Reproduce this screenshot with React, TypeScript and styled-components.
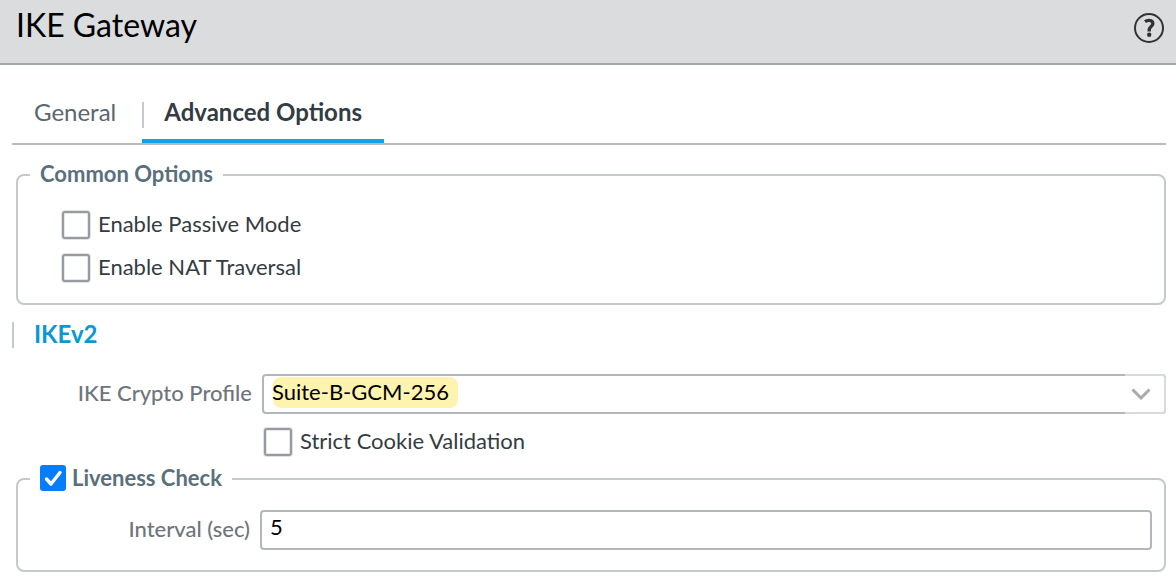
import React, { useState } from "react";
import styled, { createGlobalStyle } from "styled-components";

const GlobalStyle = createGlobalStyle`
  *, *::before, *::after { box-sizing: border-box; }
  body {
    margin: 0;
    background: #ffffff;
    color: #333c42;
    font-family: Lato, "Liberation Sans", sans-serif;
    font-size: 22px;
    line-height: 28px;
  }
`;

const Header = styled.header`
  display: flex;
  align-items: flex-start;
  justify-content: space-between;
  padding: 6px 12px 17px 16px;
  background: #dbdcde;
  border-bottom: 2px solid #a2a8ad;
`;

const Title = styled.h1`
  margin: 0;
  padding-bottom: 2px;
  color: #000000;
  font-size: 32px;
  line-height: 38px;
  font-weight: 400;
`;

const HelpButton = styled.button`
  display: flex;
  margin: 7px 0 0;
  padding: 0;
  border: 0;
  background: none;
  cursor: pointer;
`;

const Content = styled.main`
  padding: 31px 10px 8px 12px;
`;

const TabList = styled.div`
  display: flex;
  border-bottom: 2px solid #b9babb;
`;

const Tab = styled.button<{ $active?: boolean }>`
  display: flex;
  padding: 0;
  border: 0;
  border-bottom: 4px solid ${(p) => (p.$active ? "#0ba4e9" : "transparent")};
  border-radius: ${(p) => (p.$active ? "2px 2px 0 0" : "0")};
  background: none;
  color: ${(p) => (p.$active ? "#333c42" : "#5b6670")};
  font: ${(p) => (p.$active ? 700 : 400)} 24px/32px Lato, "Liberation Sans", sans-serif;
  cursor: pointer;
`;

const TabLabel = styled.span<{ $divided?: boolean }>`
  height: 26px;
  margin: 6px 0 11px;
  padding: 0 ${(p) => (p.$divided ? "22px" : "26px")} 0 20px;
  border-left: 2px solid ${(p) => (p.$divided ? "#c4cace" : "transparent")};
  line-height: 20px;
`;

const Group = styled.fieldset<{ $top: number }>`
  min-width: 0;
  margin: ${(p) => p.$top}px 0 0 4px;
  padding: 0 12px;
  border: 2px solid #c5c9cd;
  border-radius: 8px;
`;

const Legend = styled.legend`
  padding: 0 10px;
  color: #59707c;
  font-weight: 700;
`;

const LabelText = styled.span`
  display: block;
  padding-bottom: 2px;
  line-height: 26px;
`;

const CheckLabel = styled.label`
  display: flex;
  align-items: center;
  width: fit-content;
  gap: 8px;
`;

const LegendLabel = styled(CheckLabel)`
  align-items: flex-start;
  gap: 6px;
`;

const Checkbox = styled.input.attrs({ type: "checkbox" })`
  appearance: none;
  width: 28px;
  height: 28px;
  margin: 0;
  border: 2px solid #969ba1;
  border-radius: 3px;
  background: #ffffff;
  box-shadow: 0 0 0 1px #e0e2e4, inset 0 0 0 1px #e6e7e9;
`;

const CheckFrame = styled.span`
  position: relative;
  display: flex;
`;

const LegendCheckbox = styled(Checkbox)`
  width: 26px;
  height: 26px;
  &:checked {
    border-color: #067cff;
    background: #067cff;
    box-shadow: none;
  }
`;

const CheckMark = styled.svg`
  position: absolute;
  inset: 0;
  pointer-events: none;
`;

const CheckStack = styled.div`
  display: flex;
  flex-direction: column;
  gap: 15px;
  padding: 22px 0 21px 32px;
`;

const SectionTitle = styled.h2`
  margin: 17px 0 26px;
  padding: 0 0 2px 20px;
  border-left: 2px solid #c4cace;
  color: #0d96d4;
  font-size: 24px;
  line-height: 24px;
  font-weight: 700;
`;

const ProfileGrid = styled.div`
  display: grid;
  grid-template-columns: 240px 1fr;
  column-gap: 10px;
  row-gap: 14px;
  align-items: center;
`;

const IntervalRow = styled.div`
  display: grid;
  grid-template-columns: 220px 1fr;
  column-gap: 10px;
  align-items: center;
  padding: 17px 0 20px;
`;

const FieldLabel = styled.label`
  padding-bottom: 3px;
  color: #6e757b;
  font-weight: 500;
  text-align: right;
  white-space: nowrap;
`;

const SelectFrame = styled.div`
  position: relative;
  display: flex;
`;

const Highlight = styled.span`
  position: absolute;
  top: 3px;
  left: 11px;
  width: 185px;
  height: 31px;
  border-radius: 8px;
  background: #fff3b0;
`;

const Select = styled.select`
  position: relative;
  appearance: none;
  width: 100%;
  height: 40px;
  padding: 0 48px 4px 8px;
  border: 2px solid #b3b7bc;
  border-radius: 4px;
  background: transparent;
  color: #000000;
  font: 400 22px/28px Lato, "Liberation Sans", sans-serif;
`;

const Trigger = styled.span`
  position: absolute;
  top: 0;
  right: 0;
  display: flex;
  width: 41px;
  height: 40px;
  align-items: center;
  justify-content: center;
  padding-right: 8px;
  border: 2px solid #d8dadc;
  border-left: 0;
  border-radius: 0 4px 4px 0;
  background: #ffffff;
  pointer-events: none;
`;

const CookieOption = styled(CheckLabel)`
  grid-column: 2;
  margin-left: 2px;
`;

const TextInput = styled.input`
  width: 100%;
  height: 40px;
  padding: 0 8px 8px;
  border: 2px solid #b3b7bc;
  border-radius: 4px;
  background: #ffffff;
  color: #000000;
  font: 400 22px/28px Lato, "Liberation Sans", sans-serif;
`;

export default function App() {
  const [liveness, setLiveness] = useState(true);
  return (
    <>
      <GlobalStyle />
      <Header>
        <Title>IKE Gateway</Title>
        <HelpButton type="button" aria-label="Help">
          <svg width="30" height="30" viewBox="0 0 30 30" fill="none">
            <circle cx="15" cy="15" r="14" stroke="#303234" strokeWidth="2" />
            <path
              d="M11 8.6C12.4 7.6 14 7.2 15.6 7.4C17.8 7.6 19 9 18.8 10.8C18.6 13.2 15.4 13.8 15.2 17V18.4"
              stroke="#303234"
              strokeWidth="3.4"
            />
            <circle cx="15.2" cy="21.8" r="2.2" fill="#303234" />
          </svg>
        </HelpButton>
      </Header>
      <Content>
        <TabList role="tablist">
          <Tab type="button" role="tab" aria-selected={false}>
            <TabLabel>General</TabLabel>
          </Tab>
          <Tab type="button" role="tab" aria-selected $active>
            <TabLabel $divided>Advanced Options</TabLabel>
          </Tab>
        </TabList>

        <Group $top={16}>
          <Legend>
            <LabelText>Common Options</LabelText>
          </Legend>
          <CheckStack>
            <CheckLabel>
              <Checkbox />
              <LabelText>Enable Passive Mode</LabelText>
            </CheckLabel>
            <CheckLabel>
              <Checkbox />
              <LabelText>Enable NAT Traversal</LabelText>
            </CheckLabel>
          </CheckStack>
        </Group>

        <SectionTitle>IKEv2</SectionTitle>
        <ProfileGrid>
          <FieldLabel htmlFor="profile">IKE Crypto Profile</FieldLabel>
          <SelectFrame>
            <Highlight />
            <Select id="profile" defaultValue="Suite-B-GCM-256">
              <option>Suite-B-GCM-256</option>
            </Select>
            <Trigger>
              <svg width="20" height="12" viewBox="0 0 20 12" fill="none">
                <path d="M1.5 1.5L10 10L18.5 1.5" stroke="#a5abaf" strokeWidth="3" />
              </svg>
            </Trigger>
          </SelectFrame>
          <CookieOption>
            <Checkbox />
            <LabelText>Strict Cookie Validation</LabelText>
          </CookieOption>
        </ProfileGrid>

        <Group $top={9}>
          <Legend>
            <LegendLabel>
              <CheckFrame>
                <LegendCheckbox checked={liveness} onChange={(e) => setLiveness(e.target.checked)} />
                {liveness && (
                  <CheckMark width="26" height="26" viewBox="0 0 26 26" fill="none">
                    <path
                      d="M6.5 14L11 19L20 7.5"
                      stroke="#ffffff"
                      strokeWidth="3.4"
                      strokeLinecap="round"
                      strokeLinejoin="round"
                    />
                  </CheckMark>
                )}
              </CheckFrame>
              <LabelText>Liveness Check</LabelText>
            </LegendLabel>
          </Legend>
          <IntervalRow>
            <FieldLabel htmlFor="interval">Interval (sec)</FieldLabel>
            <TextInput id="interval" type="text" defaultValue="5" />
          </IntervalRow>
        </Group>
      </Content>
    </>
  );
}
